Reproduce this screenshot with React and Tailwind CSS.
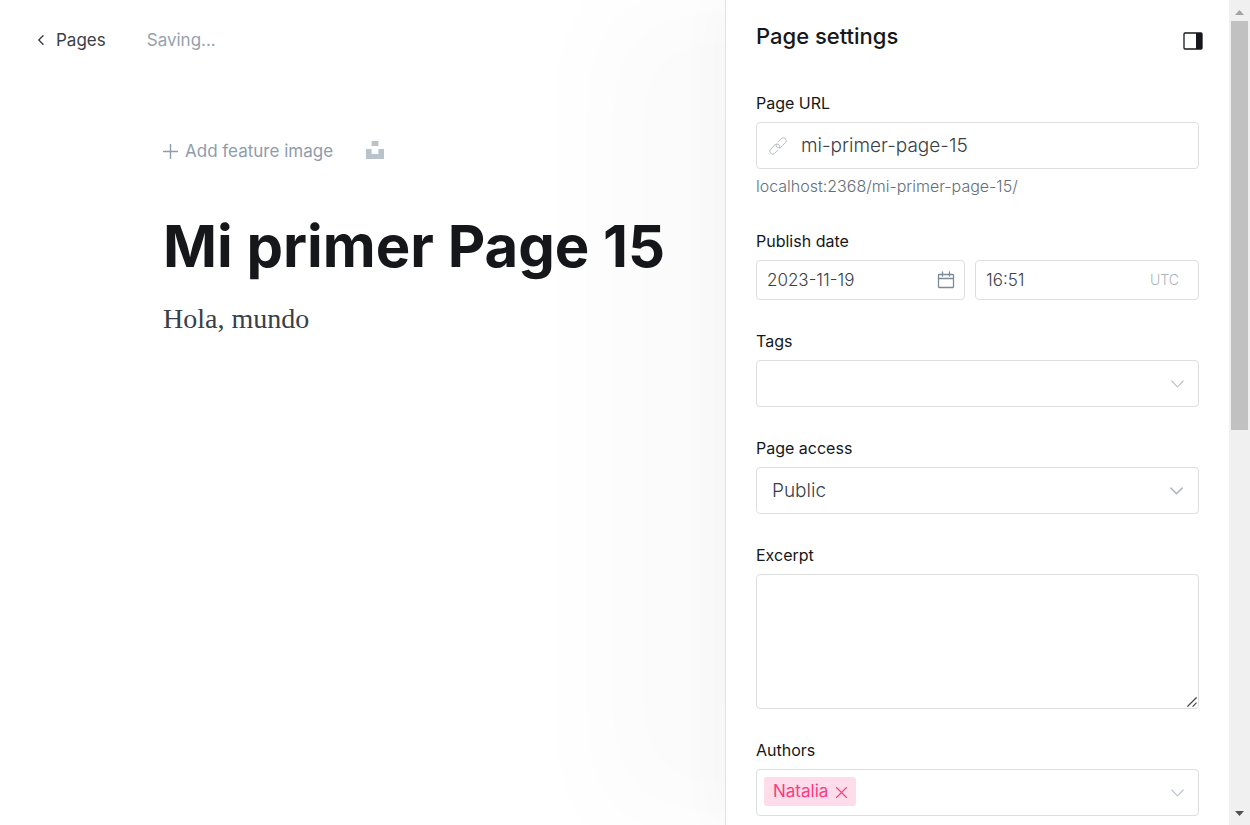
import React, { useState } from "react";

function Chevron({ strong = false }) {
  return (
    <svg
      viewBox="0 0 13 8"
      aria-hidden="true"
      className="pointer-events-none h-2 w-[13px] shrink-0"
      fill="none"
      stroke={strong ? "#a6b1bb" : "#b9c1c8"}
      strokeWidth={strong ? "1.4" : "1.1"}
    >
      <path d="M.8 1 6.500 6.800 12.200 1" strokeLinecap="round" strokeLinejoin="round" />
    </svg>
  );
}

function Field({ id, label, children }) {
  return (
    <div className="flex flex-col gap-2">
      <label htmlFor={id} className="text-base leading-[22px] text-[#15171a]">
        {label}
      </label>
      {children}
    </div>
  );
}

const box = "flex items-center rounded-[4px] border border-[#dddedf] bg-white";

function Scrollbar() {
  return (
    <div aria-hidden="true" className="flex w-[21px] shrink-0 flex-col items-center bg-[#f0f0f0]">
      <div className="flex h-[21px] items-center justify-center pt-1">
        <svg viewBox="0 0 9 5" className="h-[5px] w-[9px]" fill="#a3a3a3">
          <path d="M0 5 4.5 0 9 5z" />
        </svg>
      </div>
      <div className="flex w-full flex-1 flex-col px-[2px]">
        <div className="h-[52.2%] bg-[#c1c1c1]" />
      </div>
      <div className="flex h-[21px] items-center justify-center pb-0.5">
        <svg viewBox="0 0 9 5" className="h-[5px] w-[9px]" fill="#505050">
          <path d="M0 0 4.5 5 9 0z" />
        </svg>
      </div>
    </div>
  );
}

function Editor() {
  return (
    <main className="min-w-0 flex-1">
      <header className="flex items-center gap-[41px] px-9 pt-7">
        <a href="#pages" className="flex items-center gap-2.5 text-[17px] leading-6 text-[#394047]">
          <svg viewBox="0 0 10 10" aria-hidden="true" className="h-2.5 w-2.5" fill="none" stroke="#394047" strokeWidth="1.4">
            <path d="M7 .8 2.800 5 7 9.200" strokeLinecap="round" strokeLinejoin="round" />
          </svg>
          Pages
        </a>
        <span className="text-[17px] leading-6 text-[#95a1ad]">Saving...</span>
      </header>

      <div className="pt-[87px] pl-[163px]">
        <div className="flex items-start gap-[33px]">
          <button type="button" className="flex items-center gap-[7px] text-[17px] leading-6 text-[#8e9cac]">
            <svg viewBox="0 0 15 15" aria-hidden="true" className="h-[15px] w-[15px]" stroke="#8e9cac" strokeWidth="1.4">
              <path d="M7.500 .5v14M.5 7.500h14" strokeLinecap="round" />
            </svg>
            Add feature image
          </button>
          <button type="button" aria-label="Unsplash" className="pt-0.5">
            <svg viewBox="0 0 18 18" aria-hidden="true" className="h-[18px] w-[18px]" fill="#bac2ca">
              <path d="M5.600 0h6.800v5H5.600zM0 8h5.600v5h6.800V8H18v10H0z" />
            </svg>
          </button>
        </div>
        <h1 className="mt-[45px] text-[58px] leading-[76px] font-bold whitespace-nowrap text-[#15171a]">
          Mi primer Page 15
        </h1>
        <p className="mt-[17px] font-['Liberation_Serif',serif] text-[28px] leading-9 text-[#394047]">
          Hola, mundo
        </p>
      </div>
    </main>
  );
}

function Settings() {
  const [slug, setSlug] = useState("mi-primer-page-15");
  return (
    <aside className="relative flex w-[525px] shrink-0 shadow-[-125px_0_100px_rgba(0,0,0,0.02),-16px_0_40px_rgba(0,0,0,0.02)]">
      <div className="min-w-0 flex-1 overflow-hidden border-l border-[#e2e4e6] bg-white px-[30px]">
        <header className="flex h-[92px] items-start justify-between pt-[22px]">
          <h2 className="text-[22px] leading-7 font-medium text-[#15171a]">Page settings</h2>
          <button type="button" aria-label="Close settings" className="-mr-1 pt-2.5">
            <svg viewBox="0 0 20 18" aria-hidden="true" className="h-[18px] w-5">
              <rect x="1" y="1" width="18" height="16" rx="1" fill="none" stroke="#15171a" strokeWidth="1.300" />
              <path d="M13 1h5A1 1 0 0 1 19 2v14a1 1 0 0 1-1 1H13z" fill="#15171a" />
            </svg>
          </button>
        </header>

        <form className="flex flex-col gap-[30px]" onSubmit={(e) => e.preventDefault()}>
          <Field id="url" label="Page URL">
            <div className={`${box} h-[47px] gap-[14px] px-3`}>
              <svg viewBox="0 0 24 24" aria-hidden="true" className="h-[18px] w-[18px] shrink-0" fill="none" stroke="#b4babf" strokeWidth="1.3" strokeLinecap="round" strokeLinejoin="round">
                <path d="m12 17.500-4.300 4.300a3.600 3.600 0 0 1-5.200 0l-.3-.3a3.600 3.600 0 0 1 0-5.200l5.800-5.800a3.600 3.600 0 0 1 5.200 0l.3.3a3.600 3.600 0 0 1 .9 3.400" />
                <path d="m12 6.500 4.300-4.300a3.600 3.600 0 0 1 5.200 0l.3.3a3.600 3.600 0 0 1 0 5.200L16 13.500a3.600 3.600 0 0 1-5.200 0l-.3-.3a3.600 3.600 0 0 1-.9-3.400" />
              </svg>
              <input
                id="url"
                value={slug}
                onChange={(e) => setSlug(e.target.value)}
                className="min-w-0 flex-1 text-[19px] leading-6 font-light text-[#394047] outline-none"
              />
            </div>
            <p className="-mt-1 text-base leading-[27px] font-light text-[#626f7c]">localhost:2368/{slug}/</p>
          </Field>

          <Field id="date" label="Publish date">
            <div className="grid grid-cols-[minmax(0,209fr)_minmax(0,224fr)] gap-2.5">
              <div className={`${box} h-10 pr-[9px] pl-2.5`}>
                <input id="date" defaultValue="2023-11-19" className="min-w-0 flex-1 pt-0.5 text-[17px] font-light text-[#394047] outline-none" />
                <svg viewBox="0 0 18 18" aria-hidden="true" className="h-[18px] w-[18px] shrink-0" fill="none" stroke="#7c8b9a" strokeWidth="1.3">
                  <rect x="1.500" y="3.500" width="15" height="13" rx=".8" />
                  <path d="M1.500 7.500h15M5.500 1v4M12.500 1v4" strokeLinecap="round" />
                </svg>
              </div>
              <div className={`${box} h-10 pr-[19px] pl-2.5`}>
                <input aria-label="Publish time" defaultValue="16:51" className="min-w-0 flex-1 pt-0.5 text-[17px] font-light text-[#394047] outline-none" />
                <span className="text-sm font-light text-[#aab4bd]">UTC</span>
              </div>
            </div>
          </Field>

          <Field id="tags" label="Tags">
            <div className={`${box} h-[47px] px-[14px]`}>
              <input id="tags" className="min-w-0 flex-1 text-[19px] outline-none" />
              <Chevron />
            </div>
          </Field>

          <Field id="access" label="Page access">
            <div className="grid items-center">
              <select
                id="access"
                defaultValue="Public"
                className="col-start-1 row-start-1 h-[47px] w-full appearance-none rounded-[4px] border border-[#dddedf] bg-white px-[15px] pt-0.5 text-[19px] font-light text-[#394047] outline-none"
              >
                <option>Public</option>
                <option>Members only</option>
                <option>Paid-members only</option>
              </select>
              <div className="pointer-events-none col-start-1 row-start-1 justify-self-end pr-4">
                <Chevron strong />
              </div>
            </div>
          </Field>

          <Field id="excerpt" label="Excerpt">
            <div className="grid">
              <textarea
                id="excerpt"
                className="col-start-1 row-start-1 h-[135px] resize-y rounded-[4px] border border-[#dddedf] bg-white px-3 py-2 text-[19px] outline-none [&::-webkit-resizer]:bg-transparent"
              />
              <svg
                viewBox="0 0 10 10"
                aria-hidden="true"
                className="pointer-events-none z-10 col-start-1 row-start-1 mr-0.5 mb-0.5 h-2.5 w-2.5 self-end justify-self-end"
                stroke="#4a4a4a"
                strokeWidth="1.3"
              >
                <path d="M.4 9.600 9.600.4M5.600 9.600l4-4" />
              </svg>
            </div>
          </Field>

          <Field id="authors" label="Authors">
            <div className={`${box} h-[47px] pr-[14px] pl-[7px]`}>
              <span className="mb-0.5 flex h-[29px] items-center gap-2 rounded-[3px] bg-[#ffdcea] px-[9px] pb-0.5 text-[17px] leading-6 text-[#fb3a80]">
                Natalia
                <button type="button" aria-label="Remove Natalia" className="pt-1">
                  <svg viewBox="0 0 11 11" aria-hidden="true" className="h-[11px] w-[11px]" stroke="#fb3a80" strokeWidth="1.1">
                    <path d="m.5.5 10 10M10.500.5l-10 10" strokeLinecap="round" />
                  </svg>
                </button>
              </span>
              <input id="authors" className="min-w-0 flex-1 text-[19px] outline-none" />
              <Chevron />
            </div>
          </Field>
        </form>
      </div>
      <Scrollbar />
    </aside>
  );
}

export default function App() {
  return (
    <div className="flex h-screen overflow-hidden bg-white font-['Inter',sans-serif]">
      <Editor />
      <Settings />
    </div>
  );
}
